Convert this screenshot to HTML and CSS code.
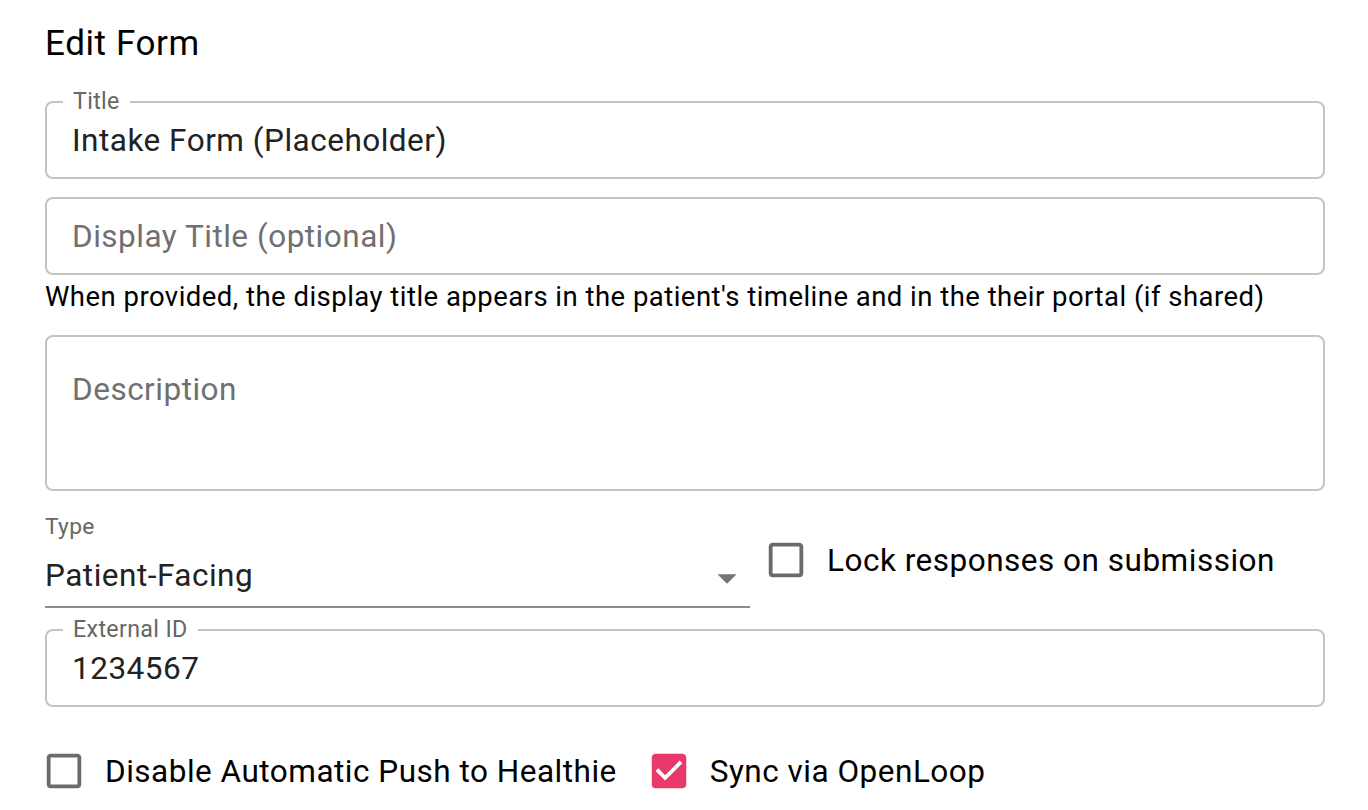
FILE: index.html
```html
<!DOCTYPE html>
<html lang="en">
<head>
<meta charset="utf-8">
<title>Edit Form</title>
<link rel="stylesheet" href="styles.css">
</head>
<body>
<main class="page">
  <h1 class="heading">Edit Form</h1>

  <div class="field">
    <span class="field-label">Title</span>
    <span class="field-value">Intake Form (Placeholder)</span>
  </div>

  <div class="field field-gap">
    <span class="field-placeholder">Display Title (optional)</span>
  </div>
  <p class="helper">When provided, the display title appears in the patient's timeline and in the their portal (if shared)</p>

  <div class="field field-multi">
    <span class="field-placeholder">Description</span>
  </div>

  <div class="type-row">
    <div class="select">
      <span class="select-label">Type</span>
      <div class="select-value-row">
        <span class="select-value">Patient-Facing</span>
        <svg class="select-arrow" viewBox="0 0 24 24" width="46" height="46"><path d="M7 10l5 5 5-5z" fill="#757575"/></svg>
      </div>
    </div>
    <label class="check check-lock">
      <svg class="check-icon" viewBox="0 0 24 24" width="46" height="46"><path fill="#6b6b6b" d="M19 5v14H5V5h14m0-2H5c-1.1 0-2 .9-2 2v14c0 1.1.9 2 2 2h14c1.1 0 2-.9 2-2V5c0-1.1-.9-2-2-2z"/></svg>
      <span class="check-text">Lock responses on submission</span>
    </label>
  </div>

  <div class="field field-ext">
    <span class="field-label">External ID</span>
    <span class="field-value">1234567</span>
  </div>

  <div class="check-row">
    <label class="check check-first">
      <svg class="check-icon" viewBox="0 0 24 24" width="46" height="46"><path fill="#6b6b6b" d="M19 5v14H5V5h14m0-2H5c-1.1 0-2 .9-2 2v14c0 1.1.9 2 2 2h14c1.1 0 2-.9 2-2V5c0-1.1-.9-2-2-2z"/></svg>
      <span class="check-text">Disable Automatic Push to Healthie</span>
    </label>
    <label class="check">
      <svg class="check-icon" viewBox="0 0 24 24" width="46" height="46"><path fill="#e8396a" d="M19 3H5c-1.11 0-2 .9-2 2v14c0 1.1.89 2 2 2h14c1.11 0 2-.9 2-2V5c0-1.1-.89-2-2-2zm-9 14l-5-5 1.41-1.41L10 14.17l7.59-7.59L19 8l-7 7z"/></svg>
      <span class="check-text">Sync via OpenLoop</span>
    </label>
  </div>
</main>
</body>
</html>
```

FILE: styles.css
```css
* { box-sizing: border-box; }

html, body {
  margin: 0;
  padding: 0;
  background: #ffffff;
}

body {
  font-family: Roboto, "Liberation Sans", Arial, sans-serif;
  color: #000;
}

.page {
  padding: 24px 43px 0 45px;
  display: flex;
  flex-direction: column;
}

.heading {
  margin: 0;
  font-size: 35px;
  font-weight: 400;
  letter-spacing: 0.6px;
  line-height: 40px;
  color: #000;
}

.field {
  position: relative;
  margin-top: 37px;
  height: 78px;
  border: 2px solid #c4c4c4;
  border-radius: 8px;
  padding: 2px 25px 0;
  display: flex;
  align-items: center;
}

.field-gap { margin-top: 18px; }

.field-label {
  position: absolute;
  left: 16px;
  top: -15px;
  padding: 0 10px;
  background: #fff;
  font-size: 23.2px;
  letter-spacing: 0.35px;
  line-height: 26px;
  color: #666;
}

.field-value {
  font-size: 31.5px;
  letter-spacing: 0.5px;
  line-height: 44px;
  color: #222;
}

.field-placeholder {
  font-size: 31.5px;
  letter-spacing: 0.5px;
  line-height: 44px;
  color: #707070;
}

.helper {
  margin: 4px 0 0;
  font-size: 27.5px;
  letter-spacing: 0.47px;
  line-height: 36px;
  color: #000;
}

.field-multi {
  margin-top: 20px;
  height: 156px;
  align-items: flex-start;
  padding-top: 31px;
}

.type-row {
  margin-top: 22px;
  display: flex;
  align-items: flex-start;
  gap: 13px;
}

.select {
  width: 705px;
  display: flex;
  flex-direction: column;
  border-bottom: 2px solid #8c8c8c;
}

.select-label {
  padding-top: 3px;
  font-size: 22.8px;
  letter-spacing: 0.3px;
  line-height: 22px;
  color: #666;
}

.select-value-row {
  display: flex;
  align-items: flex-start;
  height: 68px;
}

.select-value {
  flex: 1;
  padding-top: 16px;
  font-size: 31.5px;
  letter-spacing: 0.5px;
  line-height: 44px;
  color: #222;
}

.select-arrow {
  margin-top: 17px;
  flex: none;
}

.check {
  display: flex;
  align-items: center;
  gap: 18px;
  cursor: pointer;
}

.check-lock { margin-top: 23px; }

.check-icon { flex: none; display: block; }

.check-text {
  padding-top: 3px;
  font-size: 31.5px;
  letter-spacing: 0.5px;
  line-height: 44px;
  color: #000;
}

.field-ext { margin-top: 21px; }

.check-row {
  margin-top: 40px;
  display: flex;
  align-items: center;
  gap: 29px;
}

.check-first { margin-left: -4px; }
```
